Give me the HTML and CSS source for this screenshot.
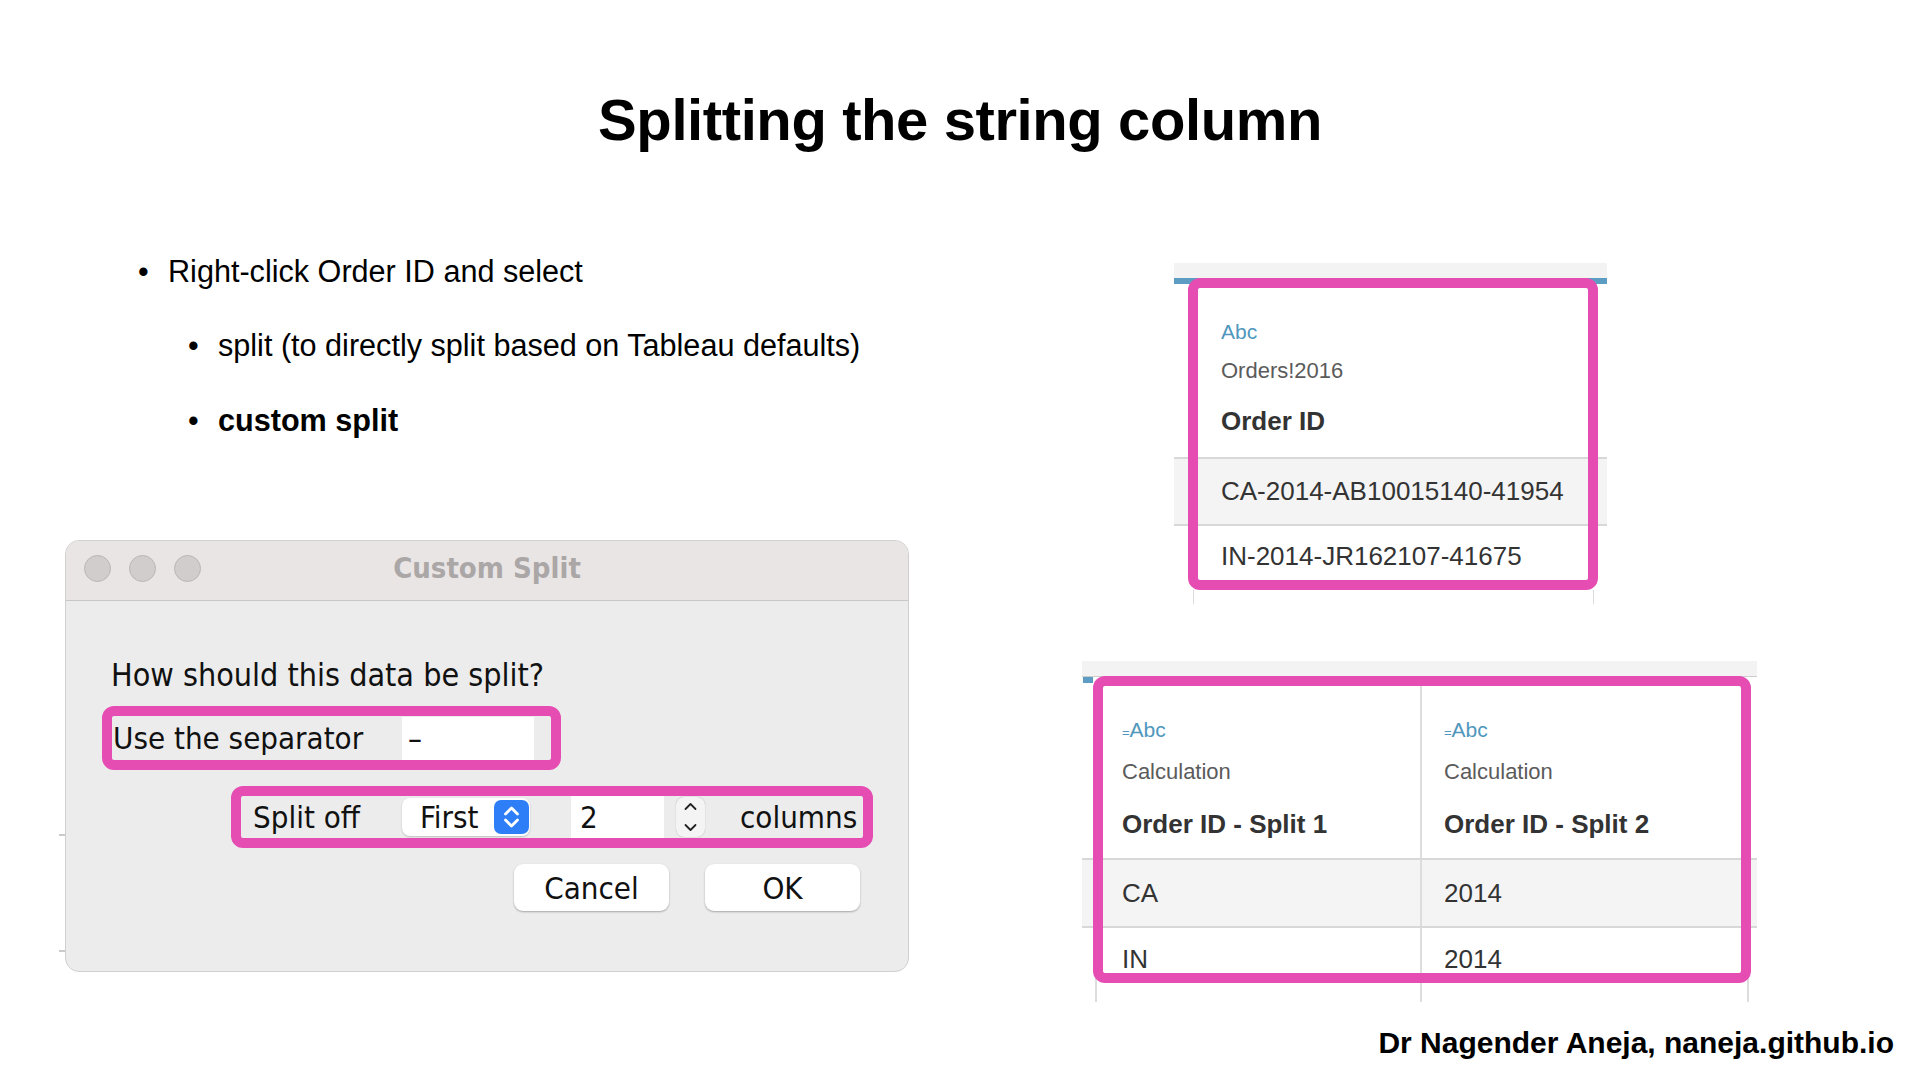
FILE: index.html
```html
<!DOCTYPE html>
<html lang="en">
  <head>
    <meta charset="UTF-8" />
    <meta name="viewport" content="width=device-width, initial-scale=1.0" />
    <title>Splitting the string column</title>
    <link rel="stylesheet" href="styles.css">
  </head>
  <body>
    <div class="slide">
      <h1 class="title">Splitting the string column</h1>
      <div class="content">
        <div class="left">
          <ul class="points">
            <li class="lvl1">Right-click Order ID and select</li>
            <li class="lvl2">split (to directly split based on Tableau defaults)</li>
            <li class="lvl2 last"><b>custom split</b></li>
          </ul>
          <!-- screenshot of the dialog -->
          <div class="shot-dialog">
            <div class="window">
              <div class="titlebar">
                <div class="lights"><span></span><span></span><span></span></div>
                <div class="win-title">Custom Split</div>
                <div></div>
              </div>
              <div class="win-body">
                <p class="question">How should this data be split?</p>
                <div class="hl sep-row">
                  <span class="sep-label">Use the separator</span>
                  <span class="text-input">–</span>
                </div>
                <div class="hl split-row">
                  <span class="split-label">Split off</span>
                  <span class="select">First
                    <span class="select-arrows">
                      <svg width="35" height="34" viewBox="0 0 35 34"><path d="M11.5 14 L17.5 8 L23.5 14 M11.5 20 L17.5 26 L23.5 20" fill="none" stroke="#fff" stroke-width="2.8" stroke-linecap="round" stroke-linejoin="round"/></svg>
                    </span>
                  </span>
                  <span class="num-input">2</span>
                  <span class="stepper">
                    <svg width="29" height="40" viewBox="0 0 29 40"><path d="M9.5 12 L14.5 7 L19.5 12 M9.5 28 L14.5 33 L19.5 28" fill="none" stroke="#222" stroke-width="1.8" stroke-linecap="round" stroke-linejoin="round"/></svg>
                  </span>
                  <span class="cols-label">columns</span>
                </div>
                <div class="buttons">
                  <button class="btn">Cancel</button>
                  <button class="btn">OK</button>
                </div>
              </div>
            </div>
          </div>
        </div>
        <div class="right">
          <!-- original field -->
          <div class="shot shot-order">
            <div class="strip"></div>
            <div class="field-head">
              <div class="type">Abc</div>
              <div class="source">Orders!2016</div>
              <div class="name">Order ID</div>
            </div>
            <div class="row alt">CA-2014-AB10015140-41954</div>
            <div class="row row-last">IN-2014-JR162107-41675</div>
            <div class="foot"><div class="foot-lines"></div></div>
            <div class="mark"></div>
          </div>
          <!-- split fields -->
          <div class="shot shot-split">
            <div class="strip2"></div>
            <div class="blue-mark"></div>
            <div class="srow srow-head">
              <div class="cell c1">
                <div class="type"><span class="calc">=</span>Abc</div>
                <div class="source">Calculation</div>
                <div class="name">Order ID - Split 1</div>
              </div>
              <div class="cell c2">
                <div class="type"><span class="calc">=</span>Abc</div>
                <div class="source">Calculation</div>
                <div class="name">Order ID - Split 2</div>
              </div>
            </div>
            <div class="srow srow-data alt">
              <div class="cell c1">CA</div>
              <div class="cell c2">2014</div>
            </div>
            <div class="srow srow-data srow-last">
              <div class="cell c1">IN</div>
              <div class="cell c2">2014</div>
            </div>
            <div class="srow srow-foot">
              <div class="cell c1"></div>
              <div class="cell c2"></div>
            </div>
            <div class="mark"></div>
          </div>
        </div>
      </div>
      <div class="credit">Dr Nagender Aneja, naneja.github.io</div>
    </div>
  </body>
</html>
```

FILE: styles.css
```css
* {
  margin: 0;
  padding: 0;
  box-sizing: border-box;
}
body {
  font-family: "Liberation Sans", Arial, sans-serif;
  background: #fff;
  color: #000;
}
.slide {
  width: 1920px;
  height: 1080px;
  overflow: hidden;
}
.title {
  padding-top: 85px;
  font-size: 58px;
  line-height: 70px;
  font-weight: 700;
  letter-spacing: -0.4px;
  text-align: center;
}
.content {
  display: grid;
  grid-template-columns: 851px 675px;
  column-gap: 172px;
  padding-left: 59px;
  margin-top: 98px;
}

/* bullets */
.points {
  list-style: none;
  font-size: 30.6px;
  line-height: 36px;
}
.points li {
  display: flex;
}
.points li::before {
  content: "•";
  flex: none;
  width: 30px;
}
.points .lvl1 {
  margin-left: 79px;
}
.points .lvl2 {
  margin-left: 129px;
  margin-top: 38px;
}
.points .last {
  margin-top: 39px;
}

/* dialog */
.shot-dialog {
  margin-top: 102px;
  height: 432px;
  padding-left: 6px;
  background:
    linear-gradient(#cacaca, #cacaca) 0 294px / 6px 2px no-repeat,
    linear-gradient(#cacaca, #cacaca) 0 410px / 6px 2px no-repeat;
}
.window {
  width: 844px;
  height: 432px;
  background: #ececec;
  border: 1px solid #d2cfcf;
  border-radius: 14px;
  overflow: hidden;
  font-family: "DejaVu Sans Condensed", "DejaVu Sans", sans-serif;
  font-stretch: condensed;
  color: #111;
}
.titlebar {
  height: 60px;
  background: #e9e5e5;
  border-bottom: 1px solid #c9c6c6;
  display: grid;
  grid-template-columns: 1fr auto 1fr;
  align-items: center;
  padding: 0 18px 5px;
}
.lights {
  display: flex;
  gap: 18px;
}
.lights span {
  width: 27px;
  height: 27px;
  border-radius: 50%;
  background: #d1cdcd;
  border: 1px solid #bab6b6;
}
.win-title {
  font-size: 29px;
  font-weight: 700;
  color: #aba7a7;
}
.win-body {
  padding: 56px 0 0 36px;
  font-size: 31px;
}
.question {
  margin-left: 9px;
  font-size: 32px;
  line-height: 36px;
}
.hl {
  border: 10px solid #e64db2;
  border-radius: 12px;
  display: flex;
  align-items: center;
}
.sep-row {
  width: 459px;
  height: 64px;
  margin-top: 13px;
  padding: 0 17px 0 1px;
}
.sep-label {
  width: 289px;
  flex: none;
}
.text-input {
  width: 132px;
  height: 43px;
  line-height: 43px;
  background: #fff;
  padding-left: 6px;
}
.split-row {
  width: 642px;
  height: 62px;
  margin-top: 16px;
  margin-left: 129px;
  padding-left: 12px;
}
.split-label {
  width: 149px;
  flex: none;
}
.select {
  width: 128px;
  height: 38px;
  flex: none;
  display: flex;
  align-items: center;
  padding-left: 18px;
  background: #fff;
  border-radius: 8px;
  box-shadow: 0 1px 2px rgba(0, 0, 0, 0.2);
}
.select-arrows {
  margin-left: auto;
  margin-right: 1px;
  width: 35px;
  height: 34px;
  background: #2e7ff7;
  border-radius: 7px;
  display: flex;
}
.num-input {
  width: 93px;
  height: 42px;
  line-height: 42px;
  margin-left: 41px;
  padding-left: 9px;
  background: #fff;
}
.stepper {
  width: 29px;
  height: 40px;
  margin-left: 12px;
  border-radius: 8px;
  background: #f4f4f4;
  box-shadow: 0 0 1px rgba(0, 0, 0, 0.35);
  display: flex;
}
.cols-label {
  margin-left: 35px;
}
.buttons {
  display: flex;
  justify-content: flex-end;
  gap: 36px;
  margin-top: 16px;
  padding-right: 48px;
}
.btn {
  width: 155px;
  height: 47px;
  background: #fff;
  border: 0;
  border-radius: 9px;
  box-shadow: 0 1px 2px rgba(0, 0, 0, 0.3);
  font: inherit;
  color: #111;
}

/* tableau screenshots */
.right {
  padding-top: 10px;
}
.shot {
  position: relative;
  background: #fff;
  color: #333;
}
.shot-order {
  width: 433px;
  margin-left: 92px;
}
.strip {
  height: 21px;
  background: #f3f3f3;
  border-bottom: 6px solid #5d9dc4;
}
.field-head {
  height: 173px;
  padding-left: 47px;
  display: flex;
  flex-direction: column;
}
.type {
  margin-top: 36px;
  font-size: 21px;
  line-height: 24px;
  color: #4f97bd;
}
.calc {
  font-size: 13px;
}
.source {
  margin-top: 13px;
  font-size: 22px;
  line-height: 28px;
  color: #5b5b5b;
}
.name {
  margin-top: 20px;
  font-size: 26px;
  line-height: 32px;
  font-weight: 700;
}
.row {
  border-top: 2px solid #d8d8d8;
  padding-left: 47px;
  font-size: 26px;
  line-height: 65px;
  height: 67px;
}
.alt {
  background: #f4f4f4;
}
.row-last {
  line-height: 60px;
  height: 66px;
}
.foot {
  height: 14px;
  padding-left: 19px;
}
.foot-lines {
  width: 401px;
  height: 14px;
  border-left: 1px solid #dcdcdc;
  border-right: 1px solid #dcdcdc;
}
.mark {
  position: absolute;
  border: 10px solid #e64db2;
  border-radius: 12px;
}
.shot-order .mark {
  left: 14px;
  top: 15px;
  width: 410px;
  height: 312px;
}

.shot-split {
  width: 675px;
  margin-top: 57px;
}
.strip2 {
  height: 16px;
  background: #f3f3f3;
  border-bottom: 1px solid #cdcdcd;
}
.blue-mark {
  height: 6px;
  background: linear-gradient(#5d9dc4, #5d9dc4) 1px 0 / 10px 100% no-repeat;
}
.srow {
  display: flex;
  padding: 0 8px 0 13px;
}
.cell {
  border-left: 2px solid #dddddd;
}
.c1 {
  width: 325px;
  padding-left: 25px;
}
.c2 {
  width: 329px;
  padding-left: 22px;
  border-right: 2px solid #dddddd;
}
.srow-head {
  height: 175px;
}
.srow-head .cell {
  display: flex;
  flex-direction: column;
}
.srow-head .type {
  margin-top: 35px;
}
.srow-head .name {
  margin-top: 22px;
}
.srow-data {
  border-top: 2px solid #d8d8d8;
  font-size: 26px;
  line-height: 66px;
  height: 68px;
}
.srow-last {
  line-height: 62px;
  height: 64px;
}
.srow-foot {
  height: 12px;
}
.shot-split .mark {
  left: 11px;
  top: 15px;
  width: 658px;
  height: 307px;
}

.credit {
  margin-top: 23px;
  padding-right: 26px;
  text-align: right;
  font-size: 30px;
  line-height: 36px;
  font-weight: 700;
}
```
